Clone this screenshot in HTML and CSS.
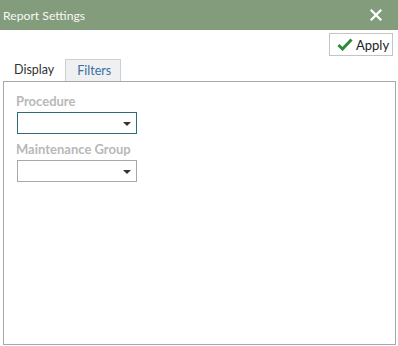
FILE: index.html
```html
<!DOCTYPE html>
<html>
<head>
<meta charset="utf-8">
<link rel="stylesheet" href="styles.css">
</head>
<body>
<div class="window">
  <div class="titlebar">
    <span class="title">Report Settings</span>
    <svg class="close" width="12" height="12" viewBox="0 0 12 12"><path d="M1.5 1.5 L10.5 10.5 M10.5 1.5 L1.5 10.5" stroke="#ffffff" stroke-width="2.2" stroke-linecap="square"/></svg>
  </div>
  <div class="toolbar">
    <button class="apply">
      <svg width="16" height="13" viewBox="0 0 16 13"><path d="M1.5 7 L5.5 11 L14.5 1.5" fill="none" stroke="#2d8a3c" stroke-width="3"/></svg>
      <span>Apply</span>
    </button>
  </div>
  <div class="tabs">
    <div class="tab">Display</div>
    <div class="tab active">Filters</div>
  </div>
  <div class="panel">
    <div class="field">
      <div class="label">Procedure</div>
      <div class="select focused"><span class="arrow"></span></div>
    </div>
    <div class="field">
      <div class="label">Maintenance Group</div>
      <div class="select"><span class="arrow"></span></div>
    </div>
  </div>
</div>
</body>
</html>
```
FILE: styles.css
```css
html, body {
  margin: 0;
  padding: 0;
  background: #ffffff;
}
body {
  font-family: "Lato", "Open Sans", sans-serif;
  width: 398px;
  height: 346px;
  overflow: hidden;
}
.window {
  display: flex;
  flex-direction: column;
  height: 346px;
}
.titlebar {
  height: 30px;
  flex: 0 0 30px;
  background: #839c7b;
  display: flex;
  align-items: center;
  justify-content: space-between;
  padding: 0 16px 0 3px;
}
.title {
  color: #f6f8f4;
  font-size: 12.2px;
}
.close {
  display: block;
}
.toolbar {
  display: flex;
  justify-content: flex-end;
  padding: 3px 5px 0 0;
  height: 24px;
}
.apply {
  display: flex;
  align-items: center;
  gap: 3px;
  height: 23px;
  width: 64px;
  padding: 0 0 0 7px;
  margin: 0;
  border: 1px solid #c4c4c4;
  background: #ffffff;
  font-family: "Lato", "Open Sans", sans-serif;
  font-size: 13px;
  color: #222222;
}
.tabs {
  display: flex;
  margin-left: 3px;
  margin-top: 2px;
  height: 22px;
}
.tab {
  font-size: 12.5px;
  color: #333333;
  padding: 3px 11px 0 11px;
  box-sizing: border-box;
  height: 23px;
}
.tab.active {
  width: 56px;
  padding: 3px 0 0 11px;
  color: #3b6ea0;
  background: #eef0f2;
  border: 1px solid #cfcfcf;
  border-bottom: none;
}
.panel {
  flex: 1;
  margin: 0 2px 1px 3px;
  border: 1px solid #a8a8a8;
  padding: 10px 0 0 12px;
  display: flex;
  flex-direction: column;
  gap: 6px;
}
.label {
  font-size: 13px;
  font-weight: bold;
  color: #b8b8b8;
  height: 18px;
  line-height: 18px;
  margin-bottom: 2px;
}
.select {
  box-sizing: border-box;
  width: 120px;
  height: 22px;
  margin: 0 0 0 1px;
  border: 1px solid #a8a8a8;
  position: relative;
  background: #fff;
}
.select.focused {
  border-color: #2f6b7b;
}
.arrow {
  position: absolute;
  right: 5px;
  top: 9px;
  width: 0;
  height: 0;
  border-left: 4px solid transparent;
  border-right: 4px solid transparent;
  border-top: 4px solid #333333;
}
```
